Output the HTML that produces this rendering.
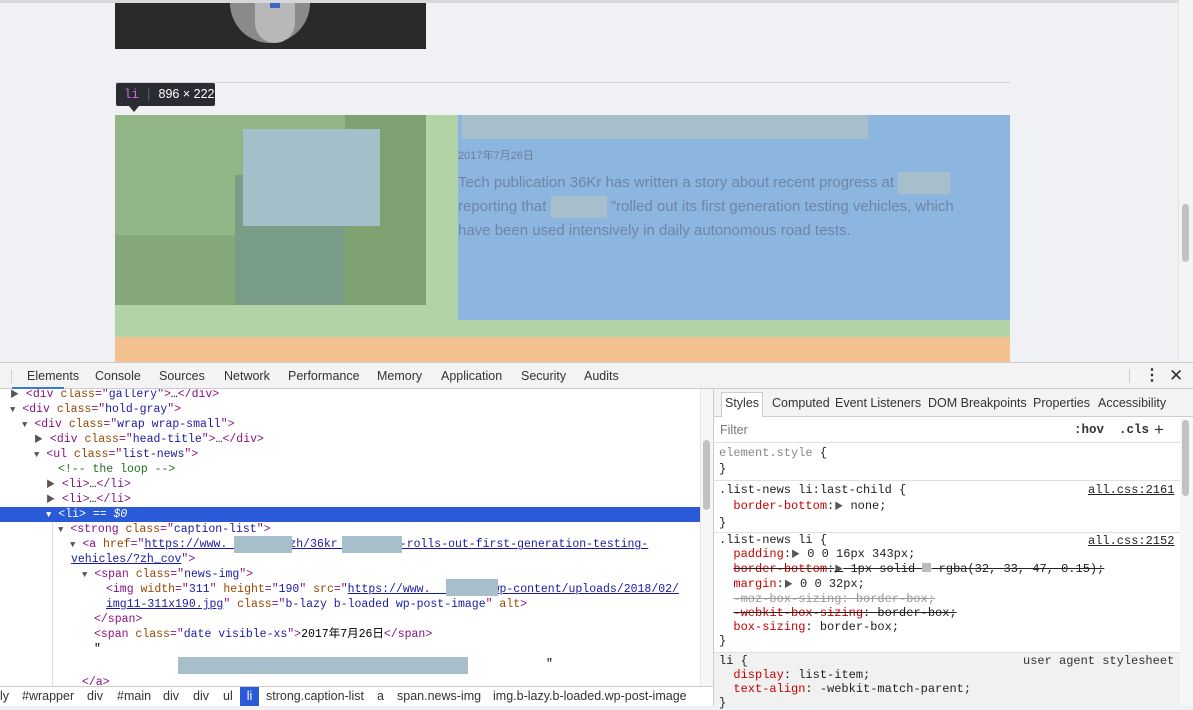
<!DOCTYPE html>
<html><head><meta charset="utf-8"><style>
*{margin:0;padding:0;box-sizing:border-box}
body{width:1193px;height:706px;overflow:hidden;background:#f0f1f5;position:relative;font-family:"Liberation Sans","Noto Sans CJK SC",sans-serif}
.a{position:absolute}
.bar span{position:absolute;top:0}
.mono{font-family:"Liberation Mono","Noto Sans CJK SC",monospace;font-size:11.5px;white-space:pre}
.tg{color:#881280}.an{color:#994500}.av{color:#1a1aa6}.cm{color:#236e25}.u{text-decoration:underline;color:#1a1aa6}
.row{position:absolute;height:15px;line-height:15px}
.tri{font-size:9px;color:#555}
.pn{color:#c80000}
.st{text-decoration:line-through}
</style></head><body>
<div class="a" style="left:0;top:0;width:1193px;height:3px;background:#d8d8dc"></div>
<div class="a" style="left:1178px;top:0;width:15px;height:362px;background:#f4f4f4;border-left:1px solid #e3e3e3"></div>
<div class="a" style="left:1182px;top:204px;width:7px;height:58px;background:#c2c2c2;border-radius:4px"></div>
<div class="a" style="left:115px;top:3px;width:311px;height:46px;background:#2a2a2a;overflow:hidden">
<div class="a" style="left:115px;top:-10px;width:80px;height:50px;background:#8a8a8a;border-radius:0 0 40px 40px"></div>
<div class="a" style="left:140px;top:0;width:40px;height:40px;background:#b8b8b8;border-radius:0 0 20px 20px"></div>
<div class="a" style="left:155px;top:0;width:10px;height:5px;background:#3a6ac0"></div>
</div>
<div class="a" style="left:115px;top:82px;width:895px;height:1px;background:#d2d2d6"></div>
<div class="a" style="left:116px;top:83px;width:99px;height:23px;background:#2a2b33;border-radius:2px;color:#fff;font-size:12.5px;line-height:23px;font-family:'Liberation Mono',monospace;white-space:nowrap"><span style="color:#d36ad6;margin-left:8px">li</span><span style="color:#666;margin:0 6px">|</span><span style="font-family:'Liberation Sans',sans-serif;font-size:12.5px">896 × 222</span></div>
<div class="a" style="left:129px;top:106px;width:0;height:0;border-left:5px solid transparent;border-right:5px solid transparent;border-top:6px solid #2a2b33"></div>
<div class="a" style="left:115px;top:115px;width:895px;height:222px;background:#b1d3a6"></div>
<div class="a" style="left:115px;top:337px;width:895px;height:25px;background:#f3c08f"></div>
<div class="a" style="left:115px;top:115px;width:311px;height:190px;background:#92b586;overflow:hidden">
<div class="a" style="left:120px;top:60px;width:150px;height:130px;background:#7a9d88"></div>
<div class="a" style="left:0;top:120px;width:120px;height:70px;background:#86a879"></div>
<div class="a" style="left:230px;top:0;width:81px;height:190px;background:#7fa172"></div>
</div>
<div class="a" style="left:243px;top:129px;width:137px;height:97px;background:#a5bfca"></div>
<div class="a" style="left:458px;top:115px;width:552px;height:205px;background:#8cb5df"></div>
<div class="a" style="left:462px;top:115px;width:406px;height:24px;background:#a6bfcb"></div>
<div class="a" style="left:458px;top:147px;font-size:11px;color:#6a7f9a">2017年7月26日</div>
<div class="a" style="left:458px;top:171px;width:530px;font-size:15px;line-height:24px;color:#6e86a6">Tech publication 36Kr has written a story about recent progress at <span style="display:inline-block;width:52px;height:22px;background:#a6bfcb;vertical-align:middle"></span><br>reporting that <span style="display:inline-block;width:56px;height:22px;background:#a6bfcb;vertical-align:middle"></span> "rolled out its first generation testing vehicles, which<br>have been used intensively in daily autonomous road tests.</div>
<div class="a" style="left:0;top:362px;width:1193px;height:344px;background:#fff;border-top:1px solid #cacaca"></div>
<div class="a bar" style="left:0;top:363px;width:1193px;height:26px;background:#f3f3f3;border-bottom:1px solid #ccc;font-size:12.5px;color:#333;line-height:26px"><span style="left:11px;top:7px;width:1px;height:13px;background:#ccc"></span><span style="left:27px">Elements</span><span style="left:95px">Console</span><span style="left:159px">Sources</span><span style="left:224px">Network</span><span style="left:288px">Performance</span><span style="left:377px">Memory</span><span style="left:441px">Application</span><span style="left:521px">Security</span><span style="left:584px">Audits</span><span style="left:12px;top:24px;width:52px;height:2px;background:#3879d9"></span><span style="left:1129px;top:6px;width:1px;height:14px;background:#ccc"></span><span style="left:1144px;font-size:16px;font-weight:bold">⋮</span><span style="left:1169px;font-size:17px">✕</span></div>
<div class="a mono" style="left:0;top:389px;width:700px;height:297px;overflow:hidden">
<div class="row" style="top:-2px;left:10px"><span class="tri">▶</span> <span class="tg">&lt;div </span><span class="an">class</span><span class="tg">="</span><span class="av">gallery</span><span class="tg">"&gt;</span>…<span class="tg">&lt;/div&gt;</span></div>
<div class="row" style="top:13px;left:10px"><span class="tri">▼</span> <span class="tg">&lt;div </span><span class="an">class</span><span class="tg">="</span><span class="av">hold-gray</span><span class="tg">"&gt;</span></div>
<div class="row" style="top:28px;left:22px"><span class="tri">▼</span> <span class="tg">&lt;div </span><span class="an">class</span><span class="tg">="</span><span class="av">wrap wrap-small</span><span class="tg">"&gt;</span></div>
<div class="row" style="top:43px;left:34px"><span class="tri">▶</span> <span class="tg">&lt;div </span><span class="an">class</span><span class="tg">="</span><span class="av">head-title</span><span class="tg">"&gt;</span>…<span class="tg">&lt;/div&gt;</span></div>
<div class="row" style="top:58px;left:34px"><span class="tri">▼</span> <span class="tg">&lt;ul </span><span class="an">class</span><span class="tg">="</span><span class="av">list-news</span><span class="tg">"&gt;</span></div>
<div class="row" style="top:73px;left:58px"><span class="cm">&lt;!-- the loop --&gt;</span></div>
<div class="row" style="top:88px;left:46px"><span class="tri">▶</span> <span class="tg">&lt;li&gt;</span>…<span class="tg">&lt;/li&gt;</span></div>
<div class="row" style="top:103px;left:46px"><span class="tri">▶</span> <span class="tg">&lt;li&gt;</span>…<span class="tg">&lt;/li&gt;</span></div>
<div class="row" style="top:118px;left:0;width:700px;background:#2a5ad8;color:#fff;padding-left:46px"><span class="tri" style="color:#fff">▼</span> &lt;li&gt; == <i>$0</i></div>
<div class="row" style="top:133px;left:58px"><span class="tri">▼</span> <span class="tg">&lt;strong </span><span class="an">class</span><span class="tg">="</span><span class="av">caption-list</span><span class="tg">"&gt;</span></div>
<div class="row" style="top:148px;left:70px"><span class="tri">▼</span> <span class="tg">&lt;a </span><span class="an">href</span><span class="tg">="</span><span class="u">https://www.         zh/36kr         -rolls-out-first-generation-testing-</span></div>
<div class="row" style="top:163px;left:71px"><span class="u">vehicles/?zh_cov</span><span class="tg">"&gt;</span></div>
<div class="row" style="top:178px;left:82px"><span class="tri">▼</span> <span class="tg">&lt;span </span><span class="an">class</span><span class="tg">="</span><span class="av">news-img</span><span class="tg">"&gt;</span></div>
<div class="row" style="top:193px;left:106px"><span class="tg">&lt;img </span><span class="an">width</span><span class="tg">="</span><span class="av">311</span><span class="tg">" </span><span class="an">height</span><span class="tg">="</span><span class="av">190</span><span class="tg">" </span><span class="an">src</span><span class="tg">="</span><span class="u">https://www.        /wp-content/uploads/2018/02/</span></div>
<div class="row" style="top:208px;left:106px"><span class="u">img11-311x190.jpg</span><span class="tg">" </span><span class="an">class</span><span class="tg">="</span><span class="av">b-lazy b-loaded wp-post-image</span><span class="tg">" </span><span class="an">alt</span><span class="tg">&gt;</span></div>
<div class="row" style="top:223px;left:94px"><span class="tg">&lt;/span&gt;</span></div>
<div class="row" style="top:238px;left:94px"><span class="tg">&lt;span </span><span class="an">class</span><span class="tg">="</span><span class="av">date visible-xs</span><span class="tg">"&gt;</span>2017年7月26日<span class="tg">&lt;/span&gt;</span></div>
<div class="row" style="top:253px;left:94px">"</div>
<div class="row" style="top:268px;left:546px">"</div>
<div class="row" style="top:286px;left:82px"><span class="tg">&lt;/a&gt;</span></div>
</div>
<div class="a" style="left:234px;top:536px;width:58px;height:17px;background:#a6bfcb"></div>
<div class="a" style="left:342px;top:536px;width:60px;height:17px;background:#a6bfcb"></div>
<div class="a" style="left:446px;top:579px;width:52px;height:17px;background:#a6bfcb"></div>
<div class="a" style="left:178px;top:657px;width:290px;height:17px;background:#a6bfcb"></div>
<div class="a" style="left:52px;top:522px;width:1px;height:164px;background:#ddd"></div>
<div class="a" style="left:700px;top:389px;width:13px;height:297px;background:#f6f6f6;border-left:1px solid #e6e6e6"></div>
<div class="a" style="left:703px;top:440px;width:7px;height:70px;background:#c2c2c2;border-radius:4px"></div>
<div class="a bar" style="left:0;top:686px;width:713px;height:20px;border-top:1px solid #ccc;background:#fff;font-size:12.5px;line-height:19px;color:#333;white-space:nowrap"><span style="left:0">ly</span><span style="left:22px">#wrapper</span><span style="left:87px">div</span><span style="left:117px">#main</span><span style="left:163px">div</span><span style="left:193px">div</span><span style="left:223px">ul</span><span style="left:240px;width:19px;height:19px;background:#2a5ad8;color:#fff;text-align:center">li</span><span style="left:266px">strong.caption-list</span><span style="left:377px">a</span><span style="left:397px">span.news-img</span><span style="left:493px">img.b-lazy.b-loaded.wp-post-image</span></div>
<div class="a" style="left:713px;top:389px;width:1px;height:317px;background:#ccc"></div>
<div class="a bar" style="left:714px;top:389px;width:479px;height:28px;background:#f3f3f3;border-bottom:1px solid #ccc;font-size:12.5px;color:#333;line-height:28px;white-space:nowrap"><span style="left:7px;top:3px;width:42px;height:25px;background:#fff;border:1px solid #ccc;border-bottom:none"></span><span style="left:11px">Styles</span><span style="left:58px">Computed</span><span style="left:121px">Event Listeners</span><span style="left:214px">DOM Breakpoints</span><span style="left:319px">Properties</span><span style="left:384px">Accessibility</span></div>
<div class="a bar" style="left:714px;top:417px;width:466px;height:26px;border-bottom:1px solid #e0e0e0;font-size:12.5px;line-height:26px;white-space:nowrap"><span style="left:6px;color:#777">Filter</span><span class="mono" style="left:360px;font-weight:bold;color:#333;font-size:12.5px">:hov  .cls</span><span style="left:440px;font-size:17px;color:#333">+</span></div>
<div class="a mono" style="left:719px;top:445px;line-height:16px;color:#222;font-size:12px"><span style="color:#888">element.style</span> {<br>}</div>
<div class="a" style="left:714px;top:480px;width:466px;height:1px;background:#e0e0e0"></div>
<div class="a mono" style="left:719px;top:482px;line-height:16px;color:#222;font-size:12px">.list-news li:last-child {<br>  <span class="pn">border-bottom</span>:<span class="tri">▶</span> none;<br>}</div>
<div class="a mono u" style="left:1088px;top:482px;line-height:16px;color:#222;font-size:12px">all.css:2161</div>
<div class="a" style="left:714px;top:532px;width:466px;height:1px;background:#e0e0e0"></div>
<div class="a mono" style="left:719px;top:533px;line-height:14px;color:#222;font-size:12px">.list-news li {<br>  <span class="pn">padding</span>:<span class="tri">▶</span> 0 0 16px 343px;<br>  <span class="st"><span class="pn">border-bottom</span>:<span class="tri">▶</span> 1px solid <span style="display:inline-block;width:9px;height:9px;background:#bbb"></span> rgba(32, 33, 47, 0.15);</span><br>  <span class="pn">margin</span>:<span class="tri">▶</span> 0 0 32px;<br>  <span class="st" style="color:#999">-moz-box-sizing: border-box;</span><br>  <span class="st"><span class="pn">-webkit-box-sizing</span>: border-box;</span><br>  <span class="pn">box-sizing</span>: border-box;<br>}</div>
<div class="a mono u" style="left:1088px;top:533px;line-height:16px;color:#222;font-size:12px">all.css:2152</div>
<div class="a" style="left:714px;top:652px;width:466px;height:54px;background:#f1f1f1;border-top:1px solid #e0e0e0"></div>
<div class="a mono" style="left:719px;top:654px;line-height:14px;color:#222;font-size:12px">li {<br>  <span class="pn">display</span>: list-item;<br>  <span class="pn">text-align</span>: -webkit-match-parent;<br>}</div>
<div class="a mono" style="left:1023px;top:654px;line-height:14px;color:#333;font-size:12px">user agent stylesheet</div>
<div class="a" style="left:1180px;top:418px;width:13px;height:288px;background:#f6f6f6"></div>
<div class="a" style="left:1182px;top:420px;width:7px;height:76px;background:#c2c2c2;border-radius:4px"></div>
</body></html>
